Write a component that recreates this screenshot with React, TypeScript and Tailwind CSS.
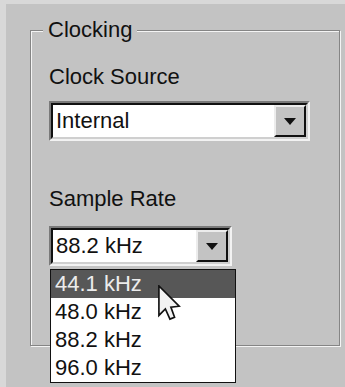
import React from "react";

function ComboBox({ value, width }: { value: string; width: string }) {
  return (
    <div className={`${width} h-[40px] border-2 border-t-[#7a7a7a] border-l-[#7a7a7a] border-b-[#f2f2f2] border-r-[#f2f2f2]`}>
      <div className="h-full border-2 border-t-[#111] border-l-[#111] border-b-[#cfcfcf] border-r-[#cfcfcf] bg-white flex items-stretch">
        <div className="flex-1 pl-[3px] leading-[32px] truncate">{value}</div>
        <div className="w-[32px] bg-[#c3c3c3] border-2 border-t-[#ececec] border-l-[#ececec] border-b-[#111] border-r-[#111] flex items-center justify-center">
          <svg width="12" height="7" viewBox="0 0 12 7">
            <polygon points="0,0 12,0 6,7" fill="#111" />
          </svg>
        </div>
      </div>
    </div>
  );
}

const rates = ["44.1 kHz", "48.0 kHz", "88.2 kHz", "96.0 kHz"];

export default function App() {
  return (
    <div className="w-[345px] h-[387px] overflow-hidden bg-[#c3c3c3] border-t-4 border-l-[6px] border-[#d8d8d8] font-['Liberation_Sans',Arial,sans-serif] text-[22px] text-[#111]">
      <div className="pt-[26px] pl-[24px] pr-[5px]">
        <div className="relative h-[316px] border border-[#858585] shadow-[inset_1px_1px_0_#f4f4f4,1px_1px_0_#f4f4f4]">
          <span className="absolute -top-[14px] left-[12px] bg-[#c3c3c3] px-[5px] leading-[26px]">
            Clocking
          </span>
          <div className="pt-[33px] pl-[18px]">
            <div className="leading-[26px]">Clock Source</div>
            <div className="mt-[11px]">
              <ComboBox value="Internal" width="w-[261px]" />
            </div>
            <div className="mt-[45px] leading-[26px]">Sample Rate</div>
            <div className="relative mt-[14px] w-[183px]">
              <ComboBox value="88.2 kHz" width="w-[183px]" />
              <div className="absolute left-[1px] top-[43px] w-[186px] border border-[#111] bg-white z-10">
                {rates.map((r, i) => (
                  <div
                    key={r}
                    className={`h-[28px] leading-[28px] pl-[4px] ${i === 0 ? "bg-[#575757] text-[#ececec]" : ""}`}
                  >
                    {r}
                  </div>
                ))}
                <svg
                  className="absolute left-[107px] top-[15px]"
                  width="23"
                  height="36"
                  viewBox="-0.5 -0.5 12.5 19.5"
                >
                  <polygon
                    points="0,0 0,16 3.5,12.5 6,18 8.5,17 6.5,11.5 11,11"
                    fill="#f2f2f2"
                    stroke="#111"
                    strokeWidth="0.9"
                    strokeLinejoin="miter"
                  />
                </svg>
              </div>
            </div>
          </div>
        </div>
      </div>
    </div>
  );
}
